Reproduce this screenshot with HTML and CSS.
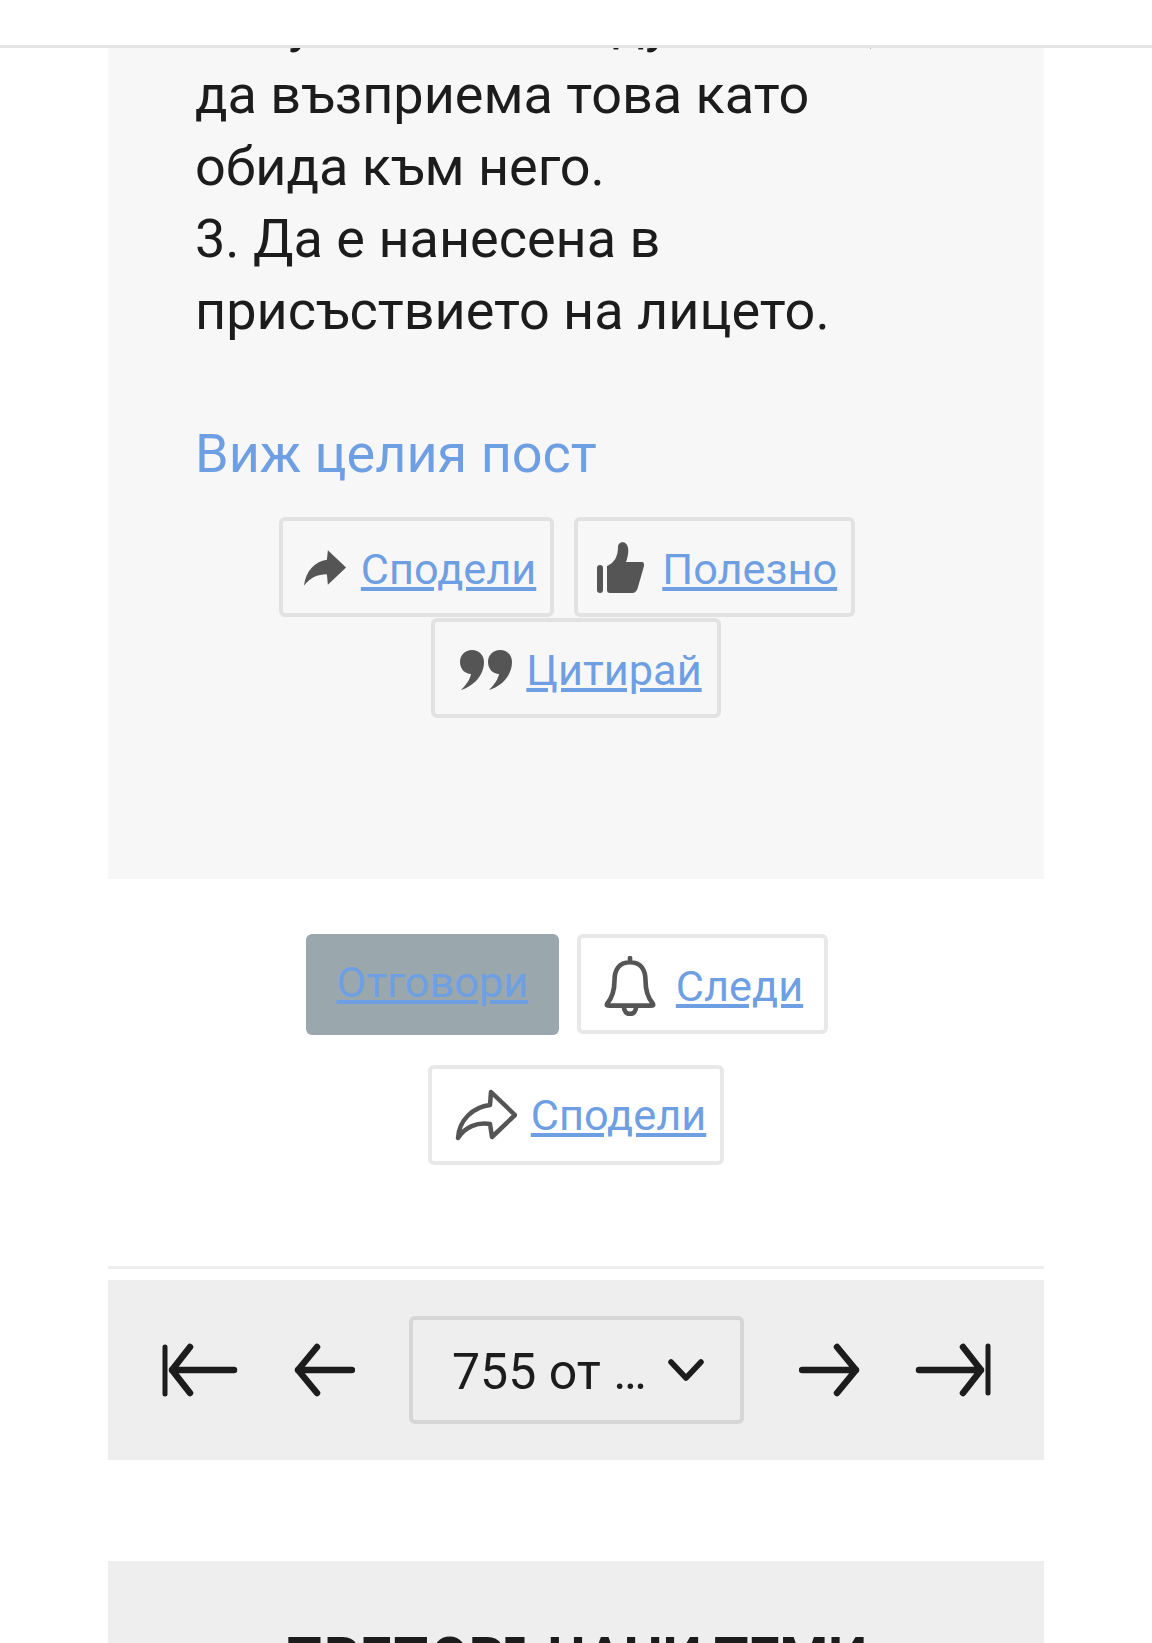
FILE: index.html
```html
<!DOCTYPE html>
<html lang="bg">
<head>
  <meta charset="utf-8">
  <title>Форум</title>
  <link rel="stylesheet" href="styles.css">
</head>
<body>
  <header class="topbar"></header>

  <main class="page">
    <article class="post">
      <p class="post-text">2. Субектът има думите си,<br>да възприема това като<br>обида към него.<br>3. Да е нанесена в<br>присъствието на лицето.</p>
      <p class="post-more"><a href="#">Виж целия пост</a></p>
      <div class="actions">
        <span class="btn">
          <svg class="icon icon-share" viewBox="0 0 46 40"><path d="M26 2 L45 20 L26 38 L25 27 C15 27 7 31 1 39 C3 24 12 14 25 12 Z" fill="#555"/></svg>
          <a href="#">Сподели</a>
        </span>
        <span class="btn btn-rowend btn-thumb">
          <svg class="icon icon-thumb" viewBox="0 0 48 52"><rect x="1" y="24" width="6" height="28" rx="3" fill="#555"/><path d="M11 25 C18 22 22 16 22 6 C22 0 31 -1 32 7 C33 12 31 18 30 21 L46 21 C48 21 48 23 48 25 L42 46 C41 50 39 52 36 52 L14 52 C12 52 11 51 11 49 Z" fill="#555"/></svg>
          <a href="#">Полезно</a>
        </span>
        <span class="btn btn-quote">
          <svg class="icon icon-quote" viewBox="0 0 52 40"><path d="M12 0 C19 0 24 5 24 12 C24 25 14 36 1 40 C7 34 10 29 11 24 C5 24 0 19 0 12 C0 5 5 0 12 0 Z M40 0 C47 0 52 5 52 12 C52 25 42 36 29 40 C35 34 38 29 39 24 C33 24 28 19 28 12 C28 5 33 0 40 0 Z" fill="#555"/></svg>
          <a href="#">Цитирай</a>
        </span>
      </div>
    </article>

    <div class="actions actions-main">
      <span class="btn btn-reply"><a href="#">Отговори</a></span>
      <span class="btn btn-white btn-rowend btn-follow">
        <svg class="icon icon-bell" viewBox="0 0 50 58" fill="none" stroke="#555" stroke-width="4.5" stroke-linecap="round" stroke-linejoin="round"><path d="M25 2 L25 6 M25 6 C14 6 10 14 10 24 C10 34 8 40 3 46 C2 48 3 48 5 48 L45 48 C47 48 48 48 47 46 C42 40 40 34 40 24 C40 14 36 6 25 6 Z M19 48 C19 54 22 56 25 56 C28 56 31 54 31 48"/></svg>
        <a href="#">Следи</a>
      </span>
      <span class="btn btn-white btn-share-line">
        <svg class="icon icon-share-line" viewBox="0 0 62 52" fill="none" stroke="#555" stroke-width="4.5" stroke-linecap="round" stroke-linejoin="round"><path d="M36 3 L60 26 L37 48 L35 35 C22 33 10 38 3 49 C4 31 18 18 35 16 Z"/></svg>
        <a href="#">Сподели</a>
      </span>
    </div>

    <hr class="divider">

    <nav class="pager">
      <svg class="arrow" viewBox="0 0 76 56"><path class="arrow-bar" d="M3 5 V52"/><path d="M28 5 L10 28 L28 51 M10 28 H72"/></svg>
      <svg class="arrow arrow-short" viewBox="0 0 62 56"><path d="M24 5 L5 28 L24 51 M5 28 H59"/></svg>
      <div class="page-select">
        <span>755 от …</span>
        <svg class="chevron" viewBox="0 0 36 24"><path d="M3 4 L18 20 L33 4"/></svg>
      </div>
      <svg class="arrow arrow-short" viewBox="0 0 62 56"><path d="M38 5 L57 28 L38 51 M3 28 H57"/></svg>
      <svg class="arrow" viewBox="0 0 76 56"><path class="arrow-bar" d="M73 4 V51"/><path d="M48 5 L66 28 L48 51 M4 28 H66"/></svg>
    </nav>

    <section class="recommended">
      <h2>ПРЕПОРЪЧАНИ ТЕМИ</h2>
    </section>
  </main>
</body>
</html>
```

FILE: styles.css
```css
html, body { margin: 0; padding: 0; height: 1643px; overflow: hidden; background: #fff; }

body { font-family: Roboto, "Noto Sans", sans-serif; color: #1c1c1c; }

a { color: #6f9fe3; }

p { margin: 0; }

/* sticky bar sits over the scrolled content */
.topbar { position: absolute; top: 0; left: 0; right: 0; height: 45px; background: #fff; border-bottom: 3px solid #e4e4e4; z-index: 2; }

.page { margin: -13px 108px 0 108px; }

.post { background: #f7f7f7; padding: 0 87px 161px 87px; }

.post-text { font-size: 54px; line-height: 72px; }

.post-more { font-size: 54px; line-height: 72px; margin-top: 71px; }
.post-more a { text-decoration: none; }

.actions { display: flex; flex-wrap: wrap; justify-content: center; gap: 1px 20px; font-size: 43.3px; }

.post .actions { margin-top: 27px; }

.actions-main { margin-top: 55px; padding: 0 87px; gap: 30px 18px; }

.btn { display: flex; align-items: center; gap: 14px; box-sizing: border-box; height: 100px; padding: 4px 14px 0 20px; border: 4px solid #e2e2e2; border-radius: 6px; }

/* trailing space on the wrapped row pulls it left of centre */
.btn-rowend { margin-right: 18px; }

.btn-thumb { padding-left: 18px; }
.btn-quote { padding-left: 22px; padding-right: 15px; }

.btn-reply { width: 253px; height: 101px; justify-content: center; padding: 0 0 4px 0; background: #9aa8ae; border: 0; }

.btn-white { background: #fff; border-color: #e8e8e8; }
.btn-follow { padding-right: 21px; }
.btn-share-line { padding: 0 14px 0 21px; }

.icon { display: block; flex: none; }
.icon-share { width: 44px; height: 39px; margin-bottom: 4px; }
.icon-thumb { width: 48px; height: 52px; margin: 0 4px 4px 0; }
.icon-quote { width: 52px; height: 40px; margin-left: 3px; }
.icon-bell { width: 52px; height: 60px; margin: 0 6px 0 3px; }
.icon-share-line { width: 62px; height: 52px; margin-left: 2px; }

.divider { height: 3px; margin: 101px 0 11px 0; border: 0; background: #eee; }

.pager { display: flex; align-items: center; justify-content: space-between; box-sizing: border-box; height: 180px; padding: 0 53px 0 54px; background: #eee; }

.arrow { width: 76px; height: 56px; fill: none; stroke: #1c1c1c; stroke-width: 6.5; stroke-linecap: round; stroke-linejoin: round; flex: none; }
.arrow-bar { stroke-width: 5; }
.arrow-short { width: 62px; }

.page-select { display: flex; align-items: center; justify-content: space-between; box-sizing: border-box; width: 335px; height: 108px; padding: 3px 36px 0 39px; border: 4px solid #d6d6d6; border-radius: 6px; font-size: 50px; }

.chevron { width: 36px; height: 24px; fill: none; stroke: #1c1c1c; stroke-width: 5.5; stroke-linecap: round; stroke-linejoin: round; margin-bottom: 3px; }

.recommended { margin-top: 101px; background: #eee; padding-top: 61px; height: 200px; text-align: center; }

.recommended h2 { margin: 0; font-size: 55.6px; line-height: 72px; font-weight: 700; }
```
